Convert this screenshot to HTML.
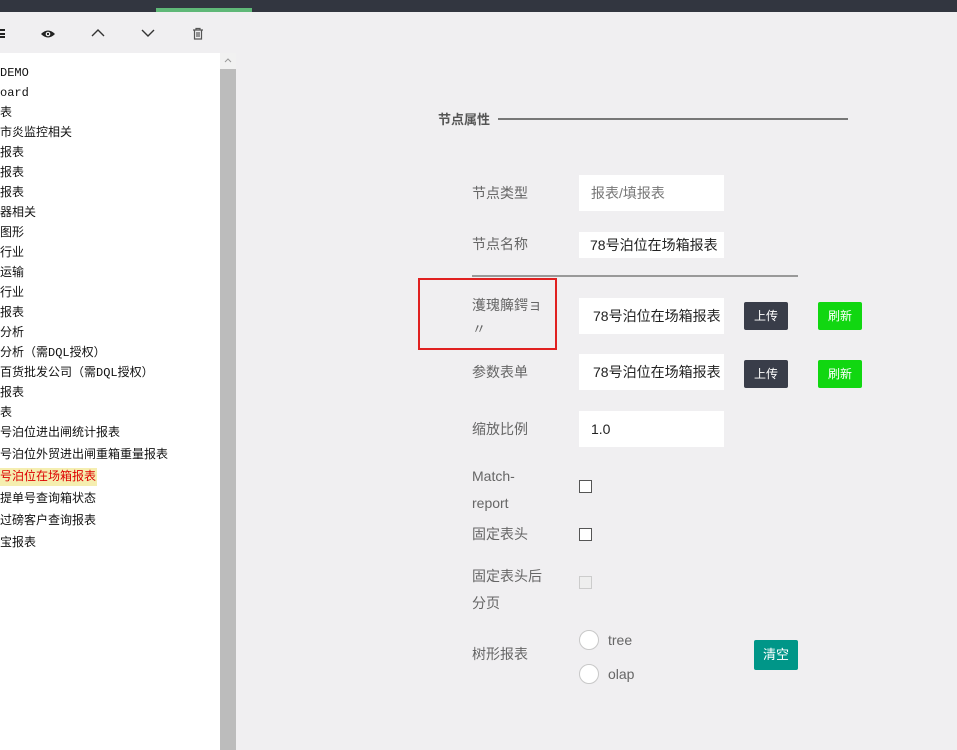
<!DOCTYPE html>
<html><head><meta charset="utf-8"><style>
*{margin:0;padding:0;box-sizing:border-box}
body{width:957px;height:750px;overflow:hidden;background:#f0eff1;font-family:"Liberation Sans","Noto Sans CJK SC",sans-serif;position:relative}
.a{position:absolute}
.top{left:0;top:0;width:957px;height:12px;background:#323640}
.tb{left:0;top:12px;width:236px;height:41px;background:#f0eff1}
.side{left:0;top:53px;width:220px;height:697px;background:#fff}
.sb{left:220px;top:53px;width:16px;height:697px;background:#bcbcbc}
.tree div{position:absolute;left:0;font-size:12px;line-height:14px;color:#111;font-family:"Liberation Mono","WenQuanYi Zen Hei",monospace;white-space:nowrap}
.lbl{font-size:14px;color:#666;line-height:27px}
.inp{background:#fff;height:36px;width:145px;font-size:14px;line-height:36px;padding-left:12px;color:#222}
.btn{height:28px;font-size:12px;color:#fff;line-height:28px;text-align:center;border-radius:2px}
.cb{width:13px;height:13px;border:1px solid #555;background:#fff}
.rd{width:20px;height:20px;border:1px solid #c8c8c8;border-radius:50%;background:#fff}
</style></head><body>
<div class="a top"></div>
<div class="a" style="left:156px;top:8px;width:96px;height:4px;background:#5fb878"></div>
<div class="a tb"></div>
<div class="a" style="left:0;top:29px;width:5px;height:9px;border-top:2px solid #222;border-bottom:2px solid #222"><div style="margin-top:1.5px;height:2px;background:#222"></div></div>
<svg class="a" style="left:40px;top:28px" width="16" height="12" viewBox="0 0 16 12"><path d="M1 6Q8 -1 15 6Q8 13 1 6Z" fill="#222"/><circle cx="8" cy="6" r="2.3" fill="#fff"/><circle cx="8" cy="6" r="1.2" fill="#222"/></svg>
<svg class="a" style="left:90px;top:28px" width="16" height="10"><path d="M2 8L8 2L14 8" stroke="#333" stroke-width="1.4" fill="none"/></svg>
<svg class="a" style="left:140px;top:28px" width="16" height="10"><path d="M2 2L8 8L14 2" stroke="#333" stroke-width="1.4" fill="none"/></svg>
<svg class="a" style="left:192px;top:27px" width="12" height="13"><path d="M1 3H11M4 3V1.5H8V3M2.5 3.5V12H9.5V3.5M5 5V10M7 5V10" stroke="#555" stroke-width="1.2" fill="none"/></svg>
<div class="a side"></div>
<div class="a sb"></div>
<div class="a" style="left:220px;top:53px;width:16px;height:16px;background:#f1f1f1"></div>
<svg class="a" style="left:224px;top:58px" width="8" height="5"><path d="M1 4L4 1L7 4" stroke="#999" fill="none"/></svg>
<div class="tree">
<div style="top:66px">DEMO</div>
<div style="top:86px">oard</div>
<div style="top:106px">表</div>
<div style="top:126px">市炎监控相关</div>
<div style="top:146px">报表</div>
<div style="top:166px">报表</div>
<div style="top:186px">报表</div>
<div style="top:206px">器相关</div>
<div style="top:226px">图形</div>
<div style="top:246px">行业</div>
<div style="top:266px">运输</div>
<div style="top:286px">行业</div>
<div style="top:306px">报表</div>
<div style="top:326px">分析</div>
<div style="top:346px">分析（需DQL授权）</div>
<div style="top:366px">百货批发公司（需DQL授权）</div>
<div style="top:386px">报表</div>
<div style="top:406px">表</div>
<div style="top:426px">号泊位进出闸统计报表</div>
<div style="top:448px">号泊位外贸进出闸重箱重量报表</div>
<div style="top:468px;background:#f5eeb0;color:#d00;padding:2px 1px 2px 0">号泊位在场箱报表</div>
<div style="top:492px">提单号查询箱状态</div>
<div style="top:514px">过磅客户查询报表</div>
<div style="top:536px">宝报表</div>
</div>

<div class="a" style="left:438px;top:109px;font-size:13px;font-weight:bold;color:#555">节点属性</div>
<div class="a" style="left:498px;top:118px;width:350px;height:2px;background:#777"></div>

<div class="a lbl" style="left:472px;top:180px">节点类型</div>
<div class="a inp" style="left:579px;top:175px;color:#777">报表/填报表</div>
<div class="a lbl" style="left:472px;top:231px">节点名称</div>
<div class="a inp" style="left:579px;top:232px;height:26px;line-height:26px;padding-left:11px">78号泊位在场箱报表</div>
<div class="a" style="left:472px;top:275px;width:326px;height:2px;background:#999"></div>

<div class="a" style="left:418px;top:278px;width:139px;height:72px;border:2px solid #e02020"></div>
<div class="a lbl" style="left:472px;top:293px;line-height:24px">濩瑰簲鍔ョ<br>〃</div>
<div class="a inp" style="left:579px;top:298px;padding-left:14px">78号泊位在场箱报表</div>
<div class="a btn" style="left:744px;top:302px;width:44px;background:#393d49">上传</div>
<div class="a btn" style="left:818px;top:302px;width:44px;background:#11d711">刷新</div>

<div class="a lbl" style="left:472px;top:359px">参数表单</div>
<div class="a inp" style="left:579px;top:354px;padding-left:14px">78号泊位在场箱报表</div>
<div class="a btn" style="left:744px;top:360px;width:44px;background:#393d49">上传</div>
<div class="a btn" style="left:818px;top:360px;width:44px;background:#11d711">刷新</div>

<div class="a lbl" style="left:472px;top:416px">缩放比例</div>
<div class="a inp" style="left:579px;top:411px">1.0</div>

<div class="a lbl" style="left:472px;top:463px">Match-<br>report</div>
<div class="a cb" style="left:579px;top:480px"></div>
<div class="a lbl" style="left:472px;top:521px">固定表头</div>
<div class="a cb" style="left:579px;top:528px"></div>
<div class="a lbl" style="left:472px;top:563px">固定表头后<br>分页</div>
<div class="a cb" style="left:579px;top:576px;border-color:#ccc;background:#eee"></div>

<div class="a rd" style="left:579px;top:630px"></div>
<div class="a" style="left:608px;top:632px;font-size:14px;color:#666">tree</div>
<div class="a lbl" style="left:472px;top:641px">树形报表</div>
<div class="a rd" style="left:579px;top:664px"></div>
<div class="a" style="left:608px;top:666px;font-size:14px;color:#666">olap</div>
<div class="a btn" style="left:754px;top:640px;width:44px;height:30px;line-height:30px;font-size:13px;background:#009688">清空</div>
</body></html>
